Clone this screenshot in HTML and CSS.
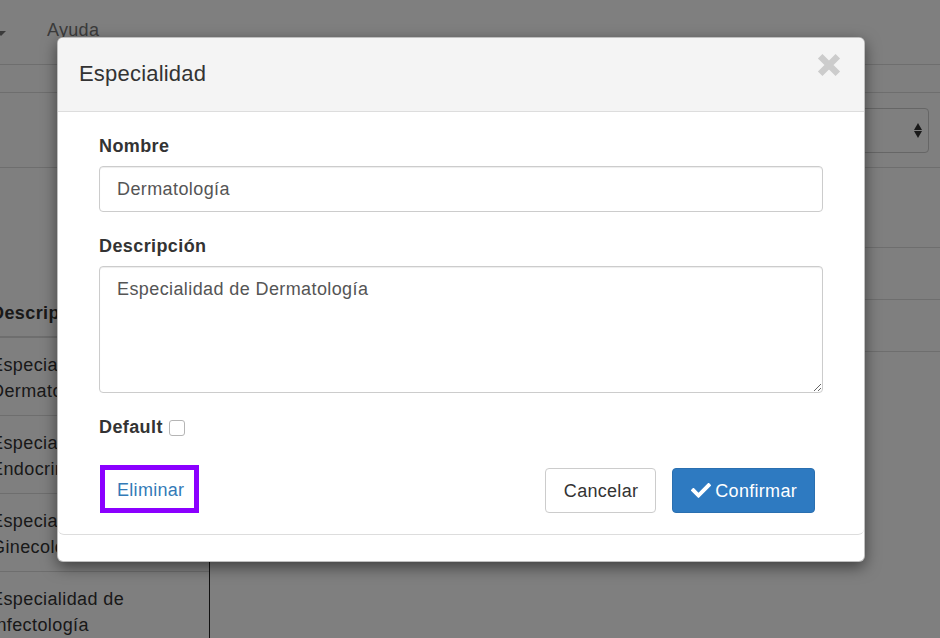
FILE: index.html
```html
<!DOCTYPE html>
<html lang="es">
<head>
<meta charset="utf-8">
<title>Especialidad</title>
<link rel="stylesheet" href="styles.css">
</head>
<body>
<div class="page">
  <header class="navbar">
    <span class="caret"></span>
    <span class="nav-item">Ayuda</span>
  </header>
  <div class="subbar"></div>
  <div class="filters">
    <div class="select">
      <span class="select-arrows"><span class="arr-up"></span><span class="arr-down"></span></span>
    </div>
  </div>
  <div class="content">
    <div class="list-col">
      <table class="table">
        <thead><tr><th>Descripción</th></tr></thead>
        <tbody>
          <tr><td>Especialidad de Dermatología</td></tr>
          <tr><td>Especialidad de Endocrinología</td></tr>
          <tr><td>Especialidad de Ginecología</td></tr>
          <tr><td>Especialidad de Infectología</td></tr>
        </tbody>
      </table>
    </div>
    <div class="detail-col">
      <div class="detail-head"></div>
      <div class="detail-row"></div>
      <div class="detail-row"></div>
    </div>
  </div>
</div>

<div class="backdrop"></div>

<div class="modal">
  <div class="modal-header">
    <h4 class="modal-title">Especialidad</h4>
    <button class="close" aria-label="Cerrar">
      <svg width="24" height="24" viewBox="0 0 24 24"><path d="M3.2 3.2 L20.8 20.8 M20.8 3.2 L3.2 20.8" stroke="#cccccc" stroke-width="6.4" fill="none"/></svg>
    </button>
  </div>
  <div class="modal-main">
    <div class="modal-body">
      <div class="form-group">
        <label class="form-label">Nombre</label>
        <input class="form-control" type="text" value="Dermatología">
      </div>
      <div class="form-group">
        <label class="form-label">Descripción</label>
        <textarea class="form-control textarea">Especialidad de Dermatología</textarea>
      </div>
      <div class="check-row">
        <label class="form-label">Default</label>
        <input class="checkbox" type="checkbox">
      </div>
    </div>
    <div class="modal-footer">
      <button class="btn-link">Eliminar</button>
      <div class="footer-right">
        <button class="btn btn-default">Cancelar</button>
        <button class="btn btn-primary">
          <svg class="check" width="20" height="18" viewBox="0 0 512 450"><path d="M173.9 439.4l-166.4-166.4c-10-10-10-26.2 0-36.2l36.2-36.2c10-10 26.2-10 36.2 0L192 312.7 432.1 72.6c10-10 26.2-10 36.2 0l36.2 36.2c10 10 10 26.2 0 36.2l-294.4 294.4c-10 10-26.2 10-36.2 0z" fill="#ffffff" transform="translate(0,-45)"/></svg>
          Confirmar
        </button>
      </div>
    </div>
  </div>
</div>
</body>
</html>
```

FILE: styles.css
```css
* { box-sizing: border-box; }

html, body {
  margin: 0;
  padding: 0;
  width: 940px;
  height: 638px;
  overflow: hidden;
  font-family: "Liberation Sans", Arial, Helvetica, sans-serif;
  color: #333;
}

.page {
  position: relative;
  width: 940px;
  height: 638px;
  background: #fff;
  overflow: hidden;
}

/* Navbar */
.navbar {
  height: 65px;
  padding-top: 17px;
  border-bottom: 1px solid #ddd;
  display: flex;
  align-items: flex-start;
  font-size: 18px;
  line-height: 26px;
  letter-spacing: 0.3px;
}
.caret {
  width: 0;
  height: 0;
  margin: 14px 0 0 -4px;
  border-top: 5px solid #777;
  border-left: 5px solid transparent;
  border-right: 5px solid transparent;
}
.nav-item {
  margin-left: 41px;
  color: #777;
}

.subbar {
  height: 28px;
  border-bottom: 1px solid #ddd;
}

.filters {
  height: 75px;
  border-bottom: 1px solid #ddd;
  display: flex;
  justify-content: flex-end;
  padding: 15px 11px 0 0;
}
.select {
  width: 330px;
  height: 45px;
  border: 1px solid #ccc;
  border-radius: 4px;
  display: flex;
  align-items: center;
  justify-content: flex-end;
  padding-right: 6px;
}
.select-arrows {
  display: flex;
  flex-direction: column;
  gap: 1px;
}
.arr-up, .arr-down {
  width: 0;
  height: 0;
  border-left: 4px solid transparent;
  border-right: 4px solid transparent;
}
.arr-up { border-bottom: 7px solid #333; }
.arr-down { border-top: 7px solid #333; }

/* Content */
.content {
  display: flex;
  height: 480px;
}
.list-col {
  width: 234px;
  margin-left: -24px;
  border-right: 1px solid #222;
  padding-top: 124px;
}
.table {
  width: 100%;
  border-collapse: collapse;
  font-size: 18px;
  line-height: 26px;
  letter-spacing: 0.4px;
}
.table th {
  text-align: left;
  font-weight: bold;
  padding: 8px 8px 10px 15px;
  border-bottom: 2px solid #ddd;
}
.table td {
  padding: 14px 30px 11px 15px;
  border-bottom: 1px solid #ddd;
}
.detail-col {
  flex: 1;
}
.detail-head {
  height: 80px;
  border-bottom: 1px solid #ddd;
}
.detail-row {
  height: 52px;
  border-bottom: 1px solid #ddd;
}

/* Backdrop */
.backdrop {
  position: absolute;
  left: 0;
  top: 0;
  width: 940px;
  height: 638px;
  background: rgba(0, 0, 0, 0.5);
}

/* Modal */
.modal {
  position: absolute;
  left: 57px;
  top: 37px;
  width: 808px;
  height: 525px;
  background: #fff;
  border: 1px solid rgba(0, 0, 0, 0.25);
  border-radius: 6px;
  box-shadow: 0 5px 15px rgba(0, 0, 0, 0.5);
  overflow: hidden;
}

.modal-header {
  position: relative;
  background: #f4f4f4;
  border-bottom: 1px solid #ddd;
  padding: 21px 21px;
  height: 74px;
}
.modal-title {
  margin: 0;
  font-size: 22px;
  line-height: 30px;
  font-weight: normal;
  color: #333;
  letter-spacing: 0.2px;
}
.close {
  position: absolute;
  top: 15px;
  right: 23px;
  padding: 0;
  margin: 0;
  border: 0;
  background: transparent;
  width: 24px;
  height: 24px;
  display: block;
}
.close svg { display: block; }

.modal-main {
  border-bottom: 1px solid #ddd;
  border-radius: 0 0 6px 6px;
}

.modal-body {
  padding: 21px 41px 0 41px;
}
.form-group {
  margin-bottom: 21px;
}
.form-label {
  display: block;
  font-size: 18px;
  line-height: 26px;
  font-weight: bold;
  color: #333;
  margin-bottom: 7px;
  letter-spacing: 0.4px;
}
.form-control {
  display: block;
  width: 100%;
  height: 46px;
  padding: 9px 17px;
  font-family: "Liberation Sans", Arial, Helvetica, sans-serif;
  font-size: 18px;
  line-height: 26px;
  letter-spacing: 0.4px;
  color: #555;
  background: #fff;
  border: 1px solid #ccc;
  border-radius: 4px;
  box-shadow: inset 0 1px 1px rgba(0, 0, 0, 0.075);
  margin: 0;
}
.textarea {
  height: 127px;
  resize: vertical;
  padding-top: 9px;
}

.check-row {
  display: flex;
  align-items: center;
  height: 26px;
}
.check-row .form-label {
  margin-bottom: 0;
}
.checkbox {
  appearance: none;
  -webkit-appearance: none;
  width: 16px;
  height: 16px;
  margin: 2px 0 0 6px;
  border: 1px solid #b5b5b5;
  border-radius: 3px;
  background: #fff;
}

.modal-footer {
  display: flex;
  justify-content: space-between;
  align-items: flex-end;
  padding: 25px 49px 21px 42px;
}
.btn-link {
  height: 48px;
  border: 5px solid #8b00ff;
  background: #fff;
  color: #337ab7;
  font-family: "Liberation Sans", Arial, Helvetica, sans-serif;
  font-size: 18px;
  letter-spacing: 0.3px;
  padding: 2px 10px 0 12px;
  margin: 0;
}
.footer-right {
  display: flex;
  gap: 16px;
}
.btn {
  height: 45px;
  border-radius: 4px;
  font-family: "Liberation Sans", Arial, Helvetica, sans-serif;
  font-size: 18px;
  letter-spacing: 0.3px;
  padding: 1px 17px 0 18px;
  margin: 0;
  display: flex;
  align-items: center;
}
.btn-default {
  background: #fff;
  border: 1px solid #ccc;
  color: #333;
}
.btn-primary {
  background: #2e7ac1;
  border: 1px solid #2a6fb0;
  color: #fff;
  padding: 1px 17px 0 18px;
  gap: 4px;
}
.check {
  display: block;
  margin-top: -1px;
}
```
